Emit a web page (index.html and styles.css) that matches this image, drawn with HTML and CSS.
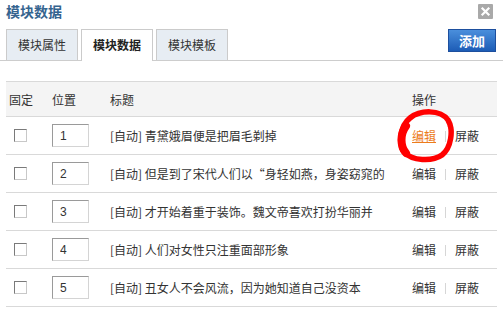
FILE: index.html
```html
<!DOCTYPE html>
<html lang="zh-CN">
<head>
  <meta charset="UTF-8" />
  <title>模块数据</title>
  <link rel="stylesheet" href="styles.css">
</head>
<body>
  <div class="dialog">
    <div class="dialog-head">
      <h2 class="dialog-title">模块数据</h2>
      <span class="close-btn" title="关闭">
        <svg width="15" height="15" viewBox="0 0 15 15">
          <rect width="15" height="15" rx="1" fill="#a9a9a9"/>
          <path d="M4.5 4.5 L10.5 10.5 M10.5 4.5 L4.5 10.5" stroke="#fff" stroke-width="2.2" stroke-linecap="square"/>
        </svg>
      </span>
    </div>

    <div class="toolbar">
      <ul class="tabs">
        <li class="tab">模块属性</li>
        <li class="tab active">模块数据</li>
        <li class="tab">模块模板</li>
      </ul>
      <button class="add-btn">添加</button>
    </div>

    <table class="data-table">
      <thead>
        <tr>
          <th class="col-fix">固定</th>
          <th class="col-pos">位置</th>
          <th class="col-title">标题</th>
          <th class="col-op">操作</th>
        </tr>
      </thead>
      <tbody>
        <tr>
          <td class="col-fix"><input type="checkbox" class="chk" /></td>
          <td class="col-pos"><input type="text" class="pos" value="1" /></td>
          <td class="col-title">[自动] 青黛娥眉便是把眉毛剃掉</td>
          <td class="col-op"><a class="op active">编辑</a><span class="sep"></span><a class="op">屏蔽</a></td>
        </tr>
        <tr>
          <td class="col-fix"><input type="checkbox" class="chk" /></td>
          <td class="col-pos"><input type="text" class="pos" value="2" /></td>
          <td class="col-title">[自动] 但是到了宋代人们以“身轻如燕，身姿窈窕的</td>
          <td class="col-op"><a class="op">编辑</a><span class="sep"></span><a class="op">屏蔽</a></td>
        </tr>
        <tr>
          <td class="col-fix"><input type="checkbox" class="chk" /></td>
          <td class="col-pos"><input type="text" class="pos" value="3" /></td>
          <td class="col-title">[自动] 才开始着重于装饰。魏文帝喜欢打扮华丽并</td>
          <td class="col-op"><a class="op">编辑</a><span class="sep"></span><a class="op">屏蔽</a></td>
        </tr>
        <tr>
          <td class="col-fix"><input type="checkbox" class="chk" /></td>
          <td class="col-pos"><input type="text" class="pos" value="4" /></td>
          <td class="col-title">[自动] 人们对女性只注重面部形象</td>
          <td class="col-op"><a class="op">编辑</a><span class="sep"></span><a class="op">屏蔽</a></td>
        </tr>
        <tr>
          <td class="col-fix"><input type="checkbox" class="chk" /></td>
          <td class="col-pos"><input type="text" class="pos" value="5" /></td>
          <td class="col-title">[自动] 丑女人不会风流，因为她知道自己没资本</td>
          <td class="col-op"><a class="op">编辑</a><span class="sep"></span><a class="op">屏蔽</a></td>
        </tr>
      </tbody>
    </table>
  </div>

  <!-- hand-drawn annotation around the first edit link -->
  <svg class="mark" width="72" height="60" viewBox="0 0 72 60">
    <path d="M22 12 C32 4, 52 3, 60 14 C66 24, 63 42, 54 49 C44 56, 24 55, 16 46 C10 38, 12 20, 22 12 Z"
          fill="none" stroke="#f00" stroke-width="5.5" stroke-linejoin="round"/>
    <path d="M18 20 C12 28, 12 40, 18 47" fill="none" stroke="#f00" stroke-width="8" stroke-linecap="round"/>
  </svg>
</body>
</html>
```

FILE: styles.css
```css
body {
  margin: 0;
  font-family: "Noto Sans CJK SC", "Liberation Sans", sans-serif;
  font-size: 12px;
  color: #333;
  background: #fff;
}
.dialog {
  width: 503px;
}
.dialog-head {
  display: flex;
  justify-content: space-between;
  align-items: flex-start;
  height: 29px;
  padding: 0 10px 0 6px;
  box-sizing: border-box;
}
.dialog-title {
  margin: 0;
  font-size: 14px;
  line-height: 23px;
  font-weight: bold;
  color: #35648f;
}
.close-btn {
  display: block;
  margin-top: 4px;
  width: 15px;
  height: 15px;
}
.close-btn svg { display: block; }

.toolbar {
  display: flex;
  justify-content: space-between;
  align-items: flex-start;
  padding: 0 7px 0 6px;
  border-bottom: 1px solid #cdcdcd;
  height: 31px;
}
.tabs {
  display: flex;
  gap: 3px;
  list-style: none;
  margin: 0;
  padding: 0;
}
.tab {
  height: 30px;
  line-height: 30px;
  padding: 0 11px;
  border: 1px solid #cbcbcb;
  border-bottom: none;
  background: #e7edf3;
  color: #333;
}
.tab.active {
  background: #fff;
  font-weight: bold;
  height: 31px;
  color: #222;
}
.add-btn {
  width: 48px;
  height: 23px;
  padding: 0;
  border: 1px solid #1d4f9e;
  background: linear-gradient(#4a8fdc, #1d5cb6);
  color: #fff;
  font-family: inherit;
  font-size: 13px;
  font-weight: bold;
  line-height: 20px;
}

.data-table {
  margin: 20px 0 0 6px;
  width: 491px;
  border-collapse: collapse;
  table-layout: fixed;
}
.data-table th,
.data-table td {
  padding: 0;
  text-align: left;
  vertical-align: middle;
  border-bottom: 1px solid #d9d9d9;
  white-space: nowrap;
}
.data-table th {
  height: 34px;
  font-weight: normal;
  background: #f4f4f4;
  border-top: 1px solid #d9d9d9;
}
.data-table td {
  height: 37px;
}
.col-fix { width: 43px; }
.data-table .col-fix { padding-left: 3px; }
.col-pos { width: 58px; }
.col-title { width: 302px; }

.chk {
  appearance: none;
  -webkit-appearance: none;
  display: block;
  margin: 0 0 0 5px;
  width: 13px;
  height: 13px;
  border: 1px solid #7a7a7a;
  border-right-color: #c8c8c8;
  border-bottom-color: #c8c8c8;
  background: #fff;
  box-sizing: border-box;
}
.pos {
  display: block;
  width: 37px;
  height: 23px;
  box-sizing: border-box;
  margin: 0;
  padding: 0 0 0 7px;
  border: 1px solid #d4d4d4;
  border-top-color: #9a9a9a;
  border-left-color: #9a9a9a;
  font-family: "Liberation Sans", sans-serif;
  font-size: 12px;
  color: #333;
}
.op {
  color: #333;
  cursor: pointer;
}
.op.active {
  color: #ec7c1c;
  text-decoration: underline;
}
.sep {
  display: inline-block;
  width: 0;
  height: 11px;
  margin: 0 9px;
  border-left: 1px solid #d6d6d6;
  vertical-align: -1px;
}

.mark {
  position: absolute;
  left: 388px;
  top: 106px;
}
```
